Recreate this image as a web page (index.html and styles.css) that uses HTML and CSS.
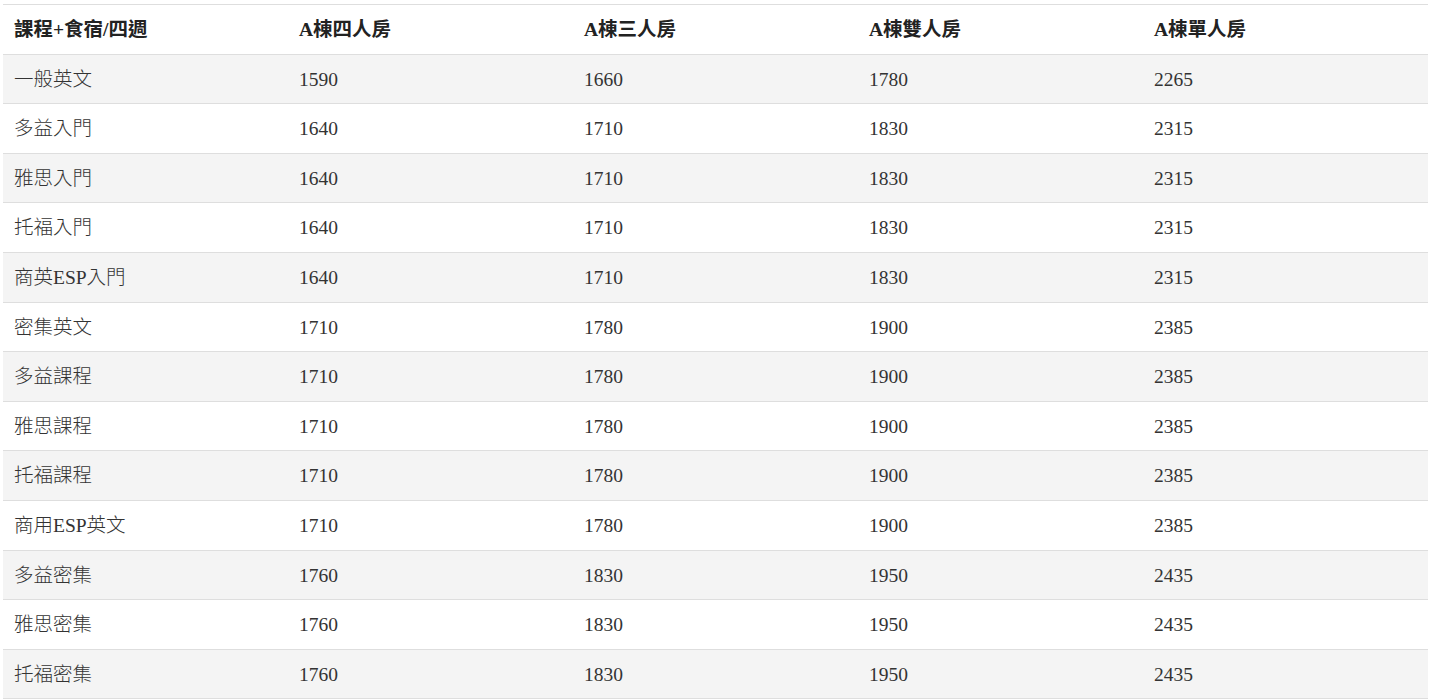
FILE: index.html
```html
<!DOCTYPE html>
<html lang="zh-Hant">
<head>
<meta charset="utf-8">
<title>課程+食宿/四週</title>
<link rel="stylesheet" href="styles.css">
</head>
<body>
<table class="price-table">
  <thead>
    <tr><th>課程+食宿/四週</th><th>A棟四人房</th><th>A棟三人房</th><th>A棟雙人房</th><th>A棟單人房</th></tr>
  </thead>
  <tbody>
    <tr><td>一般英文</td><td>1590</td><td>1660</td><td>1780</td><td>2265</td></tr>
    <tr><td>多益入門</td><td>1640</td><td>1710</td><td>1830</td><td>2315</td></tr>
    <tr><td>雅思入門</td><td>1640</td><td>1710</td><td>1830</td><td>2315</td></tr>
    <tr><td>托福入門</td><td>1640</td><td>1710</td><td>1830</td><td>2315</td></tr>
    <tr><td>商英ESP入門</td><td>1640</td><td>1710</td><td>1830</td><td>2315</td></tr>
    <tr><td>密集英文</td><td>1710</td><td>1780</td><td>1900</td><td>2385</td></tr>
    <tr><td>多益課程</td><td>1710</td><td>1780</td><td>1900</td><td>2385</td></tr>
    <tr><td>雅思課程</td><td>1710</td><td>1780</td><td>1900</td><td>2385</td></tr>
    <tr><td>托福課程</td><td>1710</td><td>1780</td><td>1900</td><td>2385</td></tr>
    <tr><td>商用ESP英文</td><td>1710</td><td>1780</td><td>1900</td><td>2385</td></tr>
    <tr><td>多益密集</td><td>1760</td><td>1830</td><td>1950</td><td>2435</td></tr>
    <tr><td>雅思密集</td><td>1760</td><td>1830</td><td>1950</td><td>2435</td></tr>
    <tr><td>托福密集</td><td>1760</td><td>1830</td><td>1950</td><td>2435</td></tr>
  </tbody>
</table>
</body>
</html>
```
FILE: styles.css
```css
html, body {
  margin: 0;
  padding: 0;
  background: #fff;
}
body {
  padding: 4px 3px 0 3px;
  font-family: "Liberation Serif", "Noto Sans CJK TC", serif;
  font-size: 19.5px;
  color: #333;
}
.price-table {
  width: 100%;
  border-collapse: collapse;
  table-layout: fixed;
}
.price-table th,
.price-table td {
  text-align: left;
  padding: 12px 11px 11px 11px;
  line-height: 25.6px;
  border-top: 1px solid #dedede;
  border-bottom: 1px solid #dedede;
  white-space: nowrap;
}
.price-table td {
  font-weight: 300;
}
.price-table th {
  font-weight: bold;
  color: #222;
}
.price-table tbody tr:nth-child(odd) {
  background: #f4f4f4;
}
```
